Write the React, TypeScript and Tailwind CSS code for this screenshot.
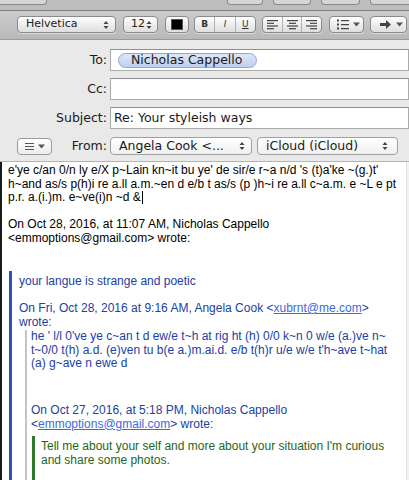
import React from "react";

const UpDown = () => (
  <svg width="6" height="10" viewBox="0 0 6 10">
    <path d="M0.5 4 L3 1 L5.5 4Z M0.5 6 L3 9 L5.5 6Z" fill="#444" />
  </svg>
);

const Down = () => (
  <svg width="7" height="5" viewBox="0 0 7 5">
    <path d="M0 0.5 L7 0.5 L3.5 4.5Z" fill="#555" />
  </svg>
);

const AlignIcon = ({ kind }: { kind: "l" | "c" | "r" }) => {
  const rows = [11, 7, 11, 7];
  return (
    <svg width="11" height="10" viewBox="0 0 11 10">
      {rows.map((w, i) => {
        const x = kind === "l" ? 0 : kind === "c" ? (11 - w) / 2 : 11 - w;
        return <rect key={i} x={x} y={i * 2.7} width={w} height="1.2" fill="#444" />;
      })}
    </svg>
  );
};

const btn =
  "h-[17px] rounded-[4px] border border-[#8a8a8a] bg-linear-to-b from-[#fefefe] to-[#dedede] flex items-center shadow-[0_1px_0_rgba(255,255,255,0.45)]";

const hdrFont = { fontFamily: '"DejaVu Sans", "Liberation Sans", sans-serif' };
const bodyFont = { fontFamily: '"Liberation Sans", Arial, sans-serif' };

export default function App() {
  return (
    <div className="w-[409px] h-[480px] overflow-hidden flex flex-col bg-white" style={hdrFont}>
      {/* top toolbar remnant */}
      <div className="h-[10px] bg-[#bdbdbd] flex items-start shrink-0">
        <div className="w-[48px] h-[5px] border-b border-r border-[#8a8a8a] rounded-br-[4px] bg-[#d6d6d6]" />
        <div className="ml-[180px] w-[37px] h-[5px] border-b border-x border-[#8a8a8a] rounded-b-[4px] bg-[#d6d6d6]" />
        <div className="ml-[10px] w-[40px] h-[5px] border-b border-x border-[#8a8a8a] rounded-b-[4px] bg-[#d6d6d6]" />
        <div className="ml-[10px] w-[40px] h-[5px] border-b border-x border-[#8a8a8a] rounded-b-[4px] bg-[#d6d6d6]" />
        <div className="ml-[10px] w-[40px] h-[5px] border-b border-l border-[#8a8a8a] rounded-bl-[4px] bg-[#d6d6d6]" />
      </div>
      <div className="h-px bg-[#7e7e7e] shrink-0" />
      {/* format bar */}
      <div className="h-[29px] shrink-0 bg-linear-to-b from-[#cdcdcd] to-[#b8b8b8] flex items-start pt-[5px] pl-[17px] border-b border-[#9a9a9a]">
        <div className={`${btn} w-[99px] pl-[8px] pr-[6px] justify-between`}>
          <span className="text-[11px] text-[#222]">Helvetica</span>
          <UpDown />
        </div>
        <div className={`${btn} ml-[7px] w-[35px] pl-[7px] pr-[5px] justify-between`}>
          <span className="text-[11px] text-[#222]">12</span>
          <UpDown />
        </div>
        <div className={`${btn} ml-[7px] w-[24px] justify-center`}>
          <div className="w-[12px] h-[11px] bg-black border border-[#555]" />
        </div>
        <div className={`${btn} ml-[5px] w-[62px]`}>
          <div className="flex-1 h-full flex items-center justify-center border-r border-[#b0b0b0] text-[9px] font-bold text-[#333]">B</div>
          <div className="flex-1 h-full flex items-center justify-center border-r border-[#b0b0b0] text-[9px] italic text-[#333]">I</div>
          <div className="flex-1 h-full flex items-center justify-center text-[9px] underline text-[#333]">U</div>
        </div>
        <div className={`${btn} ml-[6px] w-[60px]`}>
          <div className="flex-1 h-full flex items-center justify-center border-r border-[#b0b0b0]"><AlignIcon kind="l" /></div>
          <div className="flex-1 h-full flex items-center justify-center border-r border-[#b0b0b0]"><AlignIcon kind="c" /></div>
          <div className="flex-1 h-full flex items-center justify-center"><AlignIcon kind="r" /></div>
        </div>
        <div className={`${btn} ml-[7px] w-[35px] pl-[7px] gap-[4px]`}>
          <svg width="12" height="11" viewBox="0 0 12 11">
            <rect x="0" y="0.5" width="2" height="2" fill="#444" />
            <rect x="0" y="4.5" width="2" height="2" fill="#444" />
            <rect x="0" y="8.5" width="2" height="2" fill="#444" />
            <rect x="4" y="1" width="8" height="1.2" fill="#444" />
            <rect x="4" y="5" width="8" height="1.2" fill="#444" />
            <rect x="4" y="9" width="8" height="1.2" fill="#444" />
          </svg>
          <Down />
        </div>
        <div className={`${btn} ml-[6px] w-[37px] pl-[9px] gap-[5px]`}>
          <svg width="11" height="9" viewBox="0 0 11 9">
            <path d="M0 3 H6 V0 L11 4.5 L6 9 V6 H0Z" fill="#444" />
          </svg>
          <Down />
        </div>
      </div>
      {/* header fields */}
      <div className="shrink-0 bg-[#e9e9e9] pt-[9px] pb-[6px] flex flex-col gap-[7px] border-b border-[#b4b4b4] text-[12.5px] text-[#1a1a1a]">
        <div className="flex items-center h-[22px]">
          <div className="w-[107px] text-right">To:</div>
          <div className="ml-[3px] flex-1 h-[22px] bg-white border border-[#ababab] border-t-[#8f8f8f] flex items-center pl-[7px]">
            <div className="h-[15px] w-[139px] rounded-full border border-[#8da8d6] bg-linear-to-b from-[#dde7f8] to-[#bfd0ef] flex items-center pl-[12px] leading-none">
              Nicholas Cappello
            </div>
          </div>
        </div>
        <div className="flex items-center h-[22px]">
          <div className="w-[107px] text-right">Cc:</div>
          <div className="ml-[3px] flex-1 h-[22px] bg-white border border-[#ababab] border-t-[#8f8f8f]" />
        </div>
        <div className="flex items-center h-[22px]">
          <div className="w-[107px] text-right">Subject:</div>
          <div className="ml-[3px] flex-1 h-[22px] bg-white border border-[#ababab] border-t-[#8f8f8f] flex items-center pl-[3px]">
            Re: Your styleish ways
          </div>
        </div>
        <div className="flex items-center h-[18px] mt-[1px]">
          <div className="ml-[17px] w-[35px] h-[17px] rounded-[4px] border border-[#9a9a9a] bg-linear-to-b from-[#ffffff] to-[#ececec] flex items-center justify-center gap-[4px]">
            <svg width="9" height="7" viewBox="0 0 9 7">
              <rect x="0" y="0" width="9" height="1" fill="#555" />
              <rect x="0" y="3" width="9" height="1" fill="#555" />
              <rect x="0" y="6" width="9" height="1" fill="#555" />
            </svg>
            <Down />
          </div>
          <div className="w-[55px] text-right">From:</div>
          <div className="ml-[3px] w-[142px] h-[18px] rounded-[4px] border border-[#a0a0a0] bg-linear-to-b from-[#ffffff] to-[#f0f0f0] flex items-center justify-between pl-[8px] pr-[6px]">
            <span>Angela Cook &lt;...</span>
            <UpDown />
          </div>
          <div className="ml-[5px] w-[141px] h-[18px] rounded-[4px] border border-[#a0a0a0] bg-linear-to-b from-[#ffffff] to-[#f0f0f0] flex items-center justify-between pl-[8px] pr-[9px]">
            <span>iCloud (iCloud)</span>
            <UpDown />
          </div>
        </div>
      </div>
      {/* body */}
      <div className="flex-1 flex min-h-0 overflow-hidden" style={bodyFont}>
        <div className="w-[2px] bg-[#1a1a1a] shrink-0" />
        <div className="flex-1 pl-[6px] pt-[2px] text-[12px] leading-[13.5px] text-black whitespace-nowrap">
          <div>e'ye c/an 0/n ly e/X p~Lain kn~it bu ye' de sir/e r~a n/d 's (t)a'ke ~(g.)t'</div>
          <div>h~and as/s p(h)i re a.ll a.m.~en d e/b t as/s (p )h~i re a.ll c~a.m. e ~L e pt</div>
          <div className="flex items-center">
            p.r. a.(i.)m. e~ve(i)n ~d &amp;<span className="inline-block w-px h-[13px] bg-black ml-px" />
          </div>
          <div className="h-[13.5px]" />
          <div>On Oct 28, 2016, at 11:07 AM, Nicholas Cappello</div>
          <div>&lt;emmoptions@gmail.com&gt; wrote:</div>
          <div className="mt-[26px] ml-[1px] border-l-[3px] border-[#2b56ab] pl-[7px] pt-[4px] text-[#2140a3]">
            <div>your langue is strange and poetic</div>
            <div className="h-[13.5px]" />
            <div>
              On Fri, Oct 28, 2016 at 9:16 AM, Angela Cook &lt;
              <span className="text-[#3c6ade] underline">xubrnt@me.com</span>&gt;
            </div>
            <div>wrote:</div>
            <div className="mt-[1px] ml-[6px] border-l-2 border-[#c4c4c4] pl-[4px]">
              <div>he ' l/l 0've ye c~an t d ew/e t~h at rig ht (h) 0/0 k~n 0 w/e (a.)ve n~</div>
              <div>t~0/0 t(h) a.d. (e)ven tu b(e a.)m.ai.d. e/b t(h)r u/e w/e t'h~ave t~hat</div>
              <div>(a) g~ave n ewe d</div>
              <div className="h-[33.5px]" />
              <div>On Oct 27, 2016, at 5:18 PM, Nicholas Cappello</div>
              <div>
                &lt;<span className="text-[#3c6ade] underline">emmoptions@gmail.com</span>&gt; wrote:
              </div>
              <div className="mt-[5px] ml-[1px] border-l-[3px] border-[#2d7a2d] pl-[6px] pt-[4px] pb-[60px] text-[#1f6421]">
                <div>Tell me about your self and more about your situation I'm curious</div>
                <div>and share some photos.</div>
              </div>
            </div>
          </div>
        </div>
        <div className="w-[3px] shrink-0 bg-[#f2f2f2] border-l border-[#e2e2e2]" />
      </div>
    </div>
  );
}
